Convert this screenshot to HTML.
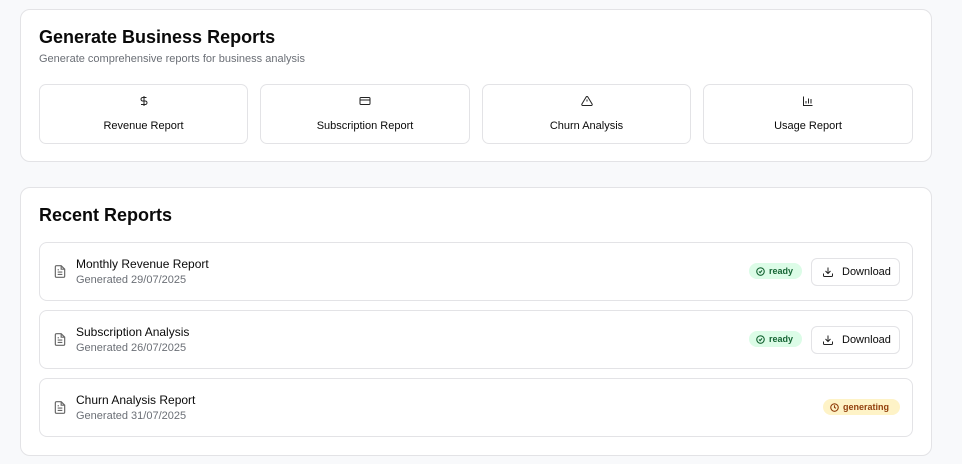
<!DOCTYPE html><html><head><style>
*{box-sizing:border-box;margin:0;padding:0}
body{width:962px;height:464px;background:#f8f9fb;font-family:"Liberation Sans",sans-serif;color:#0a0a0a;position:relative;overflow:hidden}
.card{position:absolute;left:20px;width:912px;background:#fff;border:1px solid #e3e3e6;border-radius:10px}
h2{position:absolute;left:18px;font-size:18px;font-weight:bold}
.sub{position:absolute;left:18px;top:43px;font-size:11px;color:#6b6f76}
.btn{position:absolute;top:74px;height:60px;border:1px solid #e3e3e6;border-radius:7px;text-align:center;font-size:11px}
.btn svg{position:absolute;left:50%;top:10px;margin-left:-6px}
.btn span{position:absolute;left:0;right:0;top:35px}
.row{position:absolute;left:18px;width:874px;height:59px;border:1px solid #e3e3e6;border-radius:8px}
.row .ic{position:absolute;left:13px;top:21px}
.t{position:absolute;left:36px;top:14px;font-size:12px}
.d{position:absolute;left:36px;top:31px;font-size:11px;color:#6b6f76}
.badge{position:absolute;top:20px;height:16px;border-radius:8px;font-size:9px;font-weight:bold;line-height:16px;padding-left:20px}
.badge svg{position:absolute;left:7px;top:4px}
.ready{right:110px;width:53px;background:#dcfce7;color:#166534}
.gen{right:12px;width:77px;background:#fef3c7;color:#92400e}
.dl{position:absolute;right:12px;top:15px;width:89px;height:28px;border:1px solid #e3e3e6;border-radius:6px;font-size:11px;line-height:26px;padding-left:30px}
.dl svg{position:absolute;left:10px;top:7px}
</style></head><body>
<div class="card" style="top:9px;height:153px">
<h2 style="top:17px">Generate Business Reports</h2>
<div class="sub">Generate comprehensive reports for business analysis</div>
<div class="btn" style="left:18px;width:209px"><svg width="12" height="12" viewBox="0 0 24 24" fill="none" stroke="#222" stroke-width="2"><path d="M12 2v20M17 5H9.5a3.5 3.5 0 0 0 0 7h5a3.5 3.5 0 0 1 0 7H6"/></svg><span>Revenue Report</span></div>
<div class="btn" style="left:239px;width:210px"><svg width="12" height="12" viewBox="0 0 24 24" fill="none" stroke="#222" stroke-width="2"><rect x="2" y="5" width="20" height="14" rx="2"/><path d="M2 10h20"/></svg><span>Subscription Report</span></div>
<div class="btn" style="left:461px;width:209px"><svg width="12" height="12" viewBox="0 0 24 24" fill="none" stroke="#222" stroke-width="2"><path d="M10.3 3.9 1.8 18a2 2 0 0 0 1.7 3h17a2 2 0 0 0 1.7-3L13.7 3.9a2 2 0 0 0-3.4 0zM12 9v4M12 17h.01"/></svg><span>Churn Analysis</span></div>
<div class="btn" style="left:682px;width:210px"><svg width="12" height="12" viewBox="0 0 24 24" fill="none" stroke="#222" stroke-width="2"><path d="M3 3v18h18M8 17v-5M13 17V7M18 17v-9"/></svg><span>Usage Report</span></div>
</div>
<div class="card" style="top:187px;height:269px">
<h2 style="top:17px">Recent Reports</h2>
<div class="row" style="top:54px"><svg class="ic" width="14" height="15" viewBox="0 0 24 24" fill="none" stroke="#666" stroke-width="2"><path d="M14 2H6a2 2 0 0 0-2 2v16a2 2 0 0 0 2 2h12a2 2 0 0 0 2-2V8zM14 2v6h6M16 13H8M16 17H8M10 9H8"/></svg><div class="t">Monthly Revenue Report</div><div class="d">Generated 29/07/2025</div>
<div class="badge ready"><svg width="9" height="9" viewBox="0 0 24 24" fill="none" stroke="#166534" stroke-width="3"><circle cx="12" cy="12" r="10"/><path d="m8 12 3 3 5-6"/></svg>ready</div>
<div class="dl"><svg width="12" height="12" viewBox="0 0 24 24" fill="none" stroke="#222" stroke-width="2"><path d="M21 15v4a2 2 0 0 1-2 2H5a2 2 0 0 1-2-2v-4M7 10l5 5 5-5M12 15V3"/></svg>Download</div></div>
<div class="row" style="top:122px"><svg class="ic" width="14" height="15" viewBox="0 0 24 24" fill="none" stroke="#666" stroke-width="2"><path d="M14 2H6a2 2 0 0 0-2 2v16a2 2 0 0 0 2 2h12a2 2 0 0 0 2-2V8zM14 2v6h6M16 13H8M16 17H8M10 9H8"/></svg><div class="t">Subscription Analysis</div><div class="d">Generated 26/07/2025</div>
<div class="badge ready"><svg width="9" height="9" viewBox="0 0 24 24" fill="none" stroke="#166534" stroke-width="3"><circle cx="12" cy="12" r="10"/><path d="m8 12 3 3 5-6"/></svg>ready</div>
<div class="dl"><svg width="12" height="12" viewBox="0 0 24 24" fill="none" stroke="#222" stroke-width="2"><path d="M21 15v4a2 2 0 0 1-2 2H5a2 2 0 0 1-2-2v-4M7 10l5 5 5-5M12 15V3"/></svg>Download</div></div>
<div class="row" style="top:190px"><svg class="ic" width="14" height="15" viewBox="0 0 24 24" fill="none" stroke="#666" stroke-width="2"><path d="M14 2H6a2 2 0 0 0-2 2v16a2 2 0 0 0 2 2h12a2 2 0 0 0 2-2V8zM14 2v6h6M16 13H8M16 17H8M10 9H8"/></svg><div class="t">Churn Analysis Report</div><div class="d">Generated 31/07/2025</div>
<div class="badge gen"><svg width="9" height="9" viewBox="0 0 24 24" fill="none" stroke="#92400e" stroke-width="3"><circle cx="12" cy="12" r="10"/><path d="M12 6v6l4 2"/></svg>generating</div></div>
</div>
</body></html>
